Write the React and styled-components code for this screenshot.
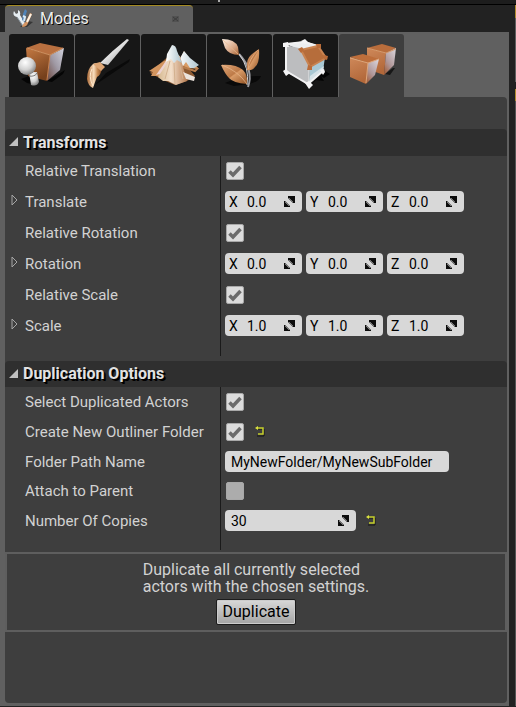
import React from "react";
import styled, { createGlobalStyle } from "styled-components";

const GlobalStyle = createGlobalStyle`
  *, *::before, *::after { box-sizing: border-box; }
  body { margin: 0; background: #222222; }
  button, input { font: inherit; color: inherit; margin: 0; padding: 0; border: 0; background: none; }
  button { cursor: pointer; }
`;

const Screen = styled.div`
  display: flex;
  flex-direction: column;
  min-height: 100vh;
  padding-bottom: 1px;
  background: #222222;
  color: #d2d2d2;
  font-family: Roboto, "Liberation Sans", sans-serif;
  font-size: 14px;
  line-height: 18px;
`;

const MenuStrip = styled.div`
  height: 5px;
  padding-left: 218px;
  background: #1d1d1d;
  border-bottom: 1px solid #000000;

  &::before {
    content: "";
    display: block;
    width: 2px;
    height: 2px;
    background: #aaaaaa;
  }
`;

const Workspace = styled.div`
  display: flex;
  flex: 1;
`;

const Dock = styled.section`
  display: flex;
  flex: 1;
  flex-direction: column;
  min-width: 0;
`;

const DockTab = styled.div`
  display: flex;
  align-items: center;
  width: 188px;
  height: 27px;
  margin-left: 5px;
  padding: 0 14px 0 8px;
  border-top: 1px solid #a48a22;
  border-radius: 4px 4px 0 0;
  background: #606060;
`;

const DockTitle = styled.h1`
  flex: 1;
  margin: 0 0 0 7px;
  color: #ececec;
  font-size: 16px;
  font-weight: 400;
  line-height: 20px;
  text-shadow: 1px 1px 0 #000000;
`;

const CloseButton = styled.button`
  display: flex;
`;

const Frame = styled.div`
  display: flex;
  flex: 1;
  flex-direction: column;
  padding: 2px 2px 3px 5px;
  background: #606060;
`;

const ModeBar = styled.div`
  display: flex;
  gap: 1px;
  padding-left: 4px;
`;

const ModeButton = styled.button`
  display: flex;
  width: 65px;
  height: 63px;
  border-radius: 3px 3px 0 0;
  background: ${({ $active }) => ($active ? "#3e3e3e" : "#171717")};
`;

const Content = styled.main`
  flex: 1;
  padding-top: 32px;
  border-radius: 0 4px 4px 4px;
  background: #3e3e3e;
`;

const Section = styled.section`
  margin-bottom: ${({ $gap }) => $gap}px;
`;

const SectionHeading = styled.h2`
  margin: 0;
`;

const SectionToggle = styled.button`
  display: flex;
  align-items: center;
  gap: 5px;
  width: 100%;
  height: ${({ $height }) => $height}px;
  padding-left: 4px;
  border-radius: 4px 4px 0 0;
  background: #2f2f2f;
  color: #e2e2e2;
  font-size: 16px;
  font-weight: 700;
  text-align: left;
  text-shadow: 1px 1px 0 #000000, 2px 2px 0 #000000;
`;

const Row = styled.div`
  display: grid;
  grid-template-columns: 215px 1fr;
`;

const NameCell = styled.div`
  display: flex;
  align-items: center;
  gap: 7px;
  padding: ${({ $top, $bottom }) => `${$top}px 0 ${$bottom}px`};
  padding-left: ${({ $nested }) => ($nested ? 6 : 20)}px;
  font-size: 15px;
`;

const ValueCell = styled.div`
  display: flex;
  align-items: center;
  gap: 4px;
  padding: ${({ $top, $bottom }) => `${$top}px 4px ${$bottom}px`};
  border-left: 1px solid #1a1a1a;
`;

const ExpandButton = styled.button`
  display: flex;
`;

const TickFrame = styled.span`
  display: grid;
  margin: 0 7px 0 1px;
`;

const TickInput = styled.input`
  grid-area: 1 / 1;
  width: 18px;
  height: 18px;
  appearance: none;
  border: 1px solid #a8a8a8;
  border-radius: 2px;
  background: #acacac;

  &:checked { background: #dcdcdc; }
  &:not(:checked) + svg { visibility: hidden; }
`;

const TickMark = styled.svg`
  grid-area: 1 / 1;
  pointer-events: none;
`;

const Field = styled.label`
  display: flex;
  align-items: center;
  width: ${({ $width }) => $width}px;
  height: 21px;
  padding: 0 7px 0 ${({ $inset }) => $inset}px;
  border-radius: 4px;
  background: #d8d8d8;
  color: #000000;
`;

const Axis = styled.span`
  width: 18px;
`;

const FieldInput = styled.input`
  flex: 1;
  min-width: 0;
  height: 21px;
  outline: 0;
`;

const ResetButton = styled.button`
  display: flex;
  margin-left: ${({ $indent }) => $indent}px;
`;

const ActionBox = styled.div`
  display: flex;
  flex-direction: column;
  align-items: center;
  gap: 4px;
  margin-top: 2px;
  padding: 7px 0 5px;
  border: 2px solid #5e5e5e;
`;

const ActionText = styled.p`
  margin: 0;
  font-size: 16px;
  line-height: 17px;
`;

const ActionButton = styled.button`
  height: 26px;
  padding: 0 6px;
  border: 1px solid #1c1c1c;
  border-radius: 2px;
  background: linear-gradient(#d8d8d8, #a4a4a4);
  box-shadow: inset 0 0 0 1px #cccccc;
  color: #000000;
  font-size: 16px;
  line-height: 20px;
`;

const RightEdge = styled.aside`
  display: flex;
  flex-direction: column;
  width: 7px;
  padding-left: 6px;
`;

const EdgePiece = styled.div`
  flex: ${({ $height }) => ($height ? `0 0 ${$height}px` : "1")};
  background: ${({ $color }) => $color};
`;

function ToolsIcon() {
  return (
    <svg width="20" height="20" viewBox="0 0 20 20" fill="none" aria-hidden="true">
      <path d="M7 18L14 18L20 13L15 12Z" fill="#252525" opacity=".7" />
      <path d="M1 2Q-1 7 4 8L10 17L13 16L7 6Q8 2 5 1L5 4L3 5Z" fill="#e6edf2" />
      <path d="M4 8L10 17" stroke="#8e9aa4" />
      <path d="M10 5L12 0L14 2L12 8L12 13L9 11Z" fill="#4f83b8" />
      <path d="M10 7L12 8L11 12" stroke="#d8e9f6" strokeWidth="2" />
      <path d="M19 5L17 4L13 13Q10 14 9 18Q14 18 15 14Z" fill="#d69663" />
      <path d="M18 5L14 13" stroke="#fff3e4" strokeWidth="2" />
    </svg>
  );
}

function PlaceIcon() {
  return (
    <svg width="65" height="63" viewBox="0 0 65 63" aria-hidden="true">
      <defs>
        <linearGradient id="boxFront" x1="0" y1="0" x2=".4" y2="1"><stop stopColor="#c57a43" /><stop offset="1" stopColor="#76401c" /></linearGradient>
        <linearGradient id="boxSide" x1="1" y1="0" x2="0" y2="1"><stop stopColor="#d2d3de" /><stop offset=".5" stopColor="#a09aa5" /><stop offset="1" stopColor="#6c4840" /></linearGradient>
        <radialGradient id="ball" cx=".4" cy=".3" r=".75"><stop stopColor="#ffffff" /><stop offset=".55" stopColor="#d2d2d2" /><stop offset="1" stopColor="#777777" /></radialGradient>
      </defs>
      <path d="M38 47L56 36L54 40L43 48ZM12 45L23 41L27 51L18 49Z" fill="#050505" />
      <path d="M17 14L31 9L55 14L41 21Z" fill="#b97040" />
      <path d="M17 14L41 21L38 47L19 42Z" fill="url(#boxFront)" />
      <path d="M41 21L55 14L51 36L38 47Z" fill="url(#boxSide)" />
      <path d="M18 14L41 21L54 14" fill="none" stroke="#d0915f" />
      <path d="M41 21L38 46" stroke="#c98250" />
      <path d="M20 38H28L30 48Q28 53 22 51Z" fill="url(#ball)" />
      <circle cx="18" cy="32" r="9" fill="url(#ball)" />
      <path d="M20 42Q26 43 28 39" fill="none" stroke="#777777" />
    </svg>
  );
}

function PaintIcon() {
  return (
    <svg width="65" height="63" viewBox="0 0 65 63" aria-hidden="true">
      <defs>
        <linearGradient id="bristle" x1="0" x2="1"><stop stopColor="#a96835" /><stop offset=".45" stopColor="#f8ddbd" /><stop offset=".7" stopColor="#c78b55" /><stop offset="1" stopColor="#814820" /></linearGradient>
        <linearGradient id="handle" x1="0" y1="0" x2="1" y2="1"><stop offset=".3" stopColor="#ffffff" /><stop offset="1" stopColor="#8b8b8b" /></linearGradient>
      </defs>
      <path d="M20 51L31 39L55 25L54 28L32 43Z" fill="#0a0a0a" />
      <path d="M52 5L54 6L33 31L25 29Q38 16 52 5Z" fill="url(#handle)" />
      <path d="M18 30Q24 27 27 34Q26 41 22 43Q20 48 18 54Q13 52 12 45Q12 35 18 30Z" fill="url(#bristle)" />
      <path d="M18 30L25 28L30 33L26 37Z" fill="#dda675" />
      <path d="M17 35Q13 42 18 52" stroke="#ffe8cd" fill="none" />
    </svg>
  );
}

function LandscapeIcon() {
  return (
    <svg width="65" height="63" viewBox="0 0 65 63" aria-hidden="true">
      <defs>
        <linearGradient id="slope" x1="0" x2="1"><stop stopColor="#d6b990" /><stop offset=".45" stopColor="#f3dfca" /><stop offset="1" stopColor="#b77d53" /></linearGradient>
        <linearGradient id="snow" x1="0" x2="1"><stop stopColor="#ffffff" /><stop offset="1" stopColor="#adc4ce" /></linearGradient>
      </defs>
      <path d="M9 39L22 27L30 20L40 25L54 42L46 47L34 51L22 46Z" fill="#8d5a32" />
      <path d="M43 17L37 29L46 34L58 35L48 24Z" fill="#d89b65" />
      <path d="M43 17L37 28L42 32L45 28L49 34L53 34L58 31L49 24Z" fill="url(#snow)" />
      <path d="M23 27L8 37L12 38L10 42L18 42L29 25Z" fill="#d3955f" />
      <path d="M27 22L17 43L22 47L27 47L35 51L46 47L39 22L32 19Z" fill="url(#slope)" />
      <path d="M31 11Q35 11 36 17L41 29L36 26L33 29L30 25L25 28L26 20Z" fill="url(#snow)" />
      <path d="M29 27L24 45M33 29L34 50M38 28L42 45" fill="none" stroke="#d3b18f" />
      <path d="M25 27L15 41L19 40L26 29" fill="#ecd2d0" />
      <path d="M42 38L54 43L53 47L45 45Z" fill="#ebe3dc" />
      <path d="M42 33L54 37L57 34" fill="none" stroke="#b87d4c" strokeWidth="2" />
    </svg>
  );
}

function FoliageIcon() {
  return (
    <svg width="65" height="63" viewBox="0 0 65 63" aria-hidden="true">
      <defs>
        <linearGradient id="leaf" x1="0" y1="0" x2="1" y2="1"><stop stopColor="#e0a779" /><stop offset=".48" stopColor="#bd7a47" /><stop offset=".52" stopColor="#d99b67" /><stop offset="1" stopColor="#915325" /></linearGradient>
        <linearGradient id="paleLeaf" x1="0" y1="0" x2="1" y2="1"><stop stopColor="#fff3e7" /><stop offset=".6" stopColor="#d9a887" /><stop offset="1" stopColor="#a86332" /></linearGradient>
      </defs>
      <path d="M18 49Q34 41 54 42Q52 48 42 50L27 52Z" fill="#090909" />
      <path d="M32 20Q47 36 41 53" fill="none" stroke="#9b9ba0" strokeWidth="2" />
      <path d="M32 20Q43 34 40 51" fill="none" stroke="#d2d2d4" />
      <path d="M15 5Q28 5 31 13L32 21Q22 21 18 14Z" fill="url(#paleLeaf)" />
      <path d="M14 31Q29 30 36 36Q41 41 40 50Q26 49 22 44Q18 40 14 31Z" fill="url(#leaf)" />
      <path d="M52 15Q53 29 48 33Q45 37 40 36Q39 25 44 21Q47 18 52 15Z" fill="url(#leaf)" />
      <path d="M15 31Q31 37 40 50M51 16Q42 25 41 35M16 6L31 20" stroke="#e9b98f" opacity=".7" fill="none" />
    </svg>
  );
}

function GeometryIcon() {
  return (
    <svg width="65" height="63" viewBox="0 0 65 63" aria-hidden="true">
      <path d="M36 52L52 37L57 40L51 44L48 42L51 47L43 46L37 52Z" fill="#040404" />
      <path d="M13 10L32 7L46 12L29 17Z" fill="#eceef0" />
      <path d="M13 11L30 15L37 33L36 50L13 38Z" fill="#bcbdbf" />
      <path d="M37 33L52 23L50 37L36 50Z" fill="#a9c8d4" />
      <path d="M37 42L51 32L50 37L36 50Z" fill="#d5e2e8" />
      <path d="M13 10V37L35 50L50 37M13 10L31 8L45 12" stroke="#f2f2f3" strokeWidth="2" fill="none" />
      <path d="M28 16L45 12L53 24L37 33Z" fill="#b66d3b" stroke="#c98350" strokeWidth="2" />
      <path d="M36 35V50" stroke="#e4e7e9" />
      <path d="M10 9L15 8L16 13H10ZM28 7L32 5L35 8L32 10ZM10 37L13 35L17 39L13 42ZM32 49L36 47L40 51L36 55ZM47 36L51 35L52 38L50 41Z" fill="#f4f4f5" />
      <path d="M25 15L29 13L31 16L28 19ZM43 10H48V14H44ZM50 21L55 22L54 26L51 25ZM35 31L39 32V36H34Z" fill="#ba6c39" />
    </svg>
  );
}

function DuplicateIcon() {
  return (
    <svg width="65" height="63" viewBox="0 0 65 63" aria-hidden="true">
      <defs>
        <linearGradient id="cubeFront" x1="0" y1="0" x2=".3" y2="1"><stop stopColor="#cf895a" /><stop offset="1" stopColor="#b2683a" /></linearGradient>
        <linearGradient id="cubeSide" x1=".8" y1="0" x2=".2" y2="1"><stop stopColor="#d7d1d7" /><stop offset=".6" stopColor="#af9698" /><stop offset="1" stopColor="#a45f3b" /></linearGradient>
      </defs>
      <path d="M46 40L54 34L56 34L51 41Z" fill="#171717" />
      <path d="M28 14L43 10L57 14L47 19Z" fill="#b96d3c" />
      <path d="M28 14L47 19L45 41L28 35Z" fill="url(#cubeFront)" />
      <path d="M47 19L57 14L55 31L45 41Z" fill="url(#cubeSide)" />
      <path d="M28 14L47 19L57 15" fill="none" stroke="#d79b6d" />
      <path d="M11 23L24 20L40 25L29 29Z" fill="#bd6e3b" />
      <path d="M11 23L29 29L27 50L11 43Z" fill="url(#cubeFront)" />
      <path d="M29 29L40 25L36 41L27 50Z" fill="url(#cubeSide)" />
      <path d="M11 24L29 29L40 25M29 29L27 49" fill="none" stroke="#dfa67a" />
    </svg>
  );
}

function CloseIcon() {
  return (
    <svg width="7" height="8" viewBox="0 0 7 8" aria-hidden="true">
      <path d="M0 1H7V7H0Z" fill="#525252" />
      <path d="M1 2L6 6M6 2L1 6" stroke="#3c3c3c" />
    </svg>
  );
}

function CornerTriangle() {
  return (
    <svg width="9" height="13" viewBox="0 0 9 13" aria-hidden="true">
      <path d="M9 1V10H0Z" fill="#c0c0c0" />
    </svg>
  );
}

function OutlineTriangle() {
  return (
    <svg width="7" height="15" viewBox="0 0 7 15" aria-hidden="true">
      <path d="M1 1L6 6L1 11Z" fill="none" stroke="#a6a6a6" />
    </svg>
  );
}

function DragIcon() {
  return (
    <svg width="11" height="12" viewBox="0 0 11 12" aria-hidden="true">
      <path d="M4 0H11V7L9 7L4 2Z" fill="#0c0c0c" />
      <path d="M0 5H1L6 10V11H0Z" fill="#0c0c0c" />
      <path d="M5 2L9 6M1 6L5 10" stroke="#777777" />
    </svg>
  );
}

function ResetIcon() {
  return (
    <svg width="10" height="12" viewBox="0 0 10 12" fill="none" aria-hidden="true">
      <path d="M3 3H9V10H2" stroke="#151515" />
      <path d="M3 2H8V8H3" stroke="#c6d02c" strokeWidth="1.5" />
      <path d="M0 2L3 0V4Z" fill="#dce340" />
    </svg>
  );
}

function Tick({ id, checked = true }) {
  return (
    <TickFrame>
      <TickInput id={id} type="checkbox" defaultChecked={checked} />
      <TickMark width="18" height="18" viewBox="0 0 18 18" fill="none" aria-hidden="true">
        <path d="M3.5 9.5L7 13L14.5 5" stroke="#6b6b6b" strokeWidth="3.5" />
      </TickMark>
    </TickFrame>
  );
}

function VectorFields({ name, value }) {
  return ["X", "Y", "Z"].map((axis) => (
    <Field key={axis} $width={77} $inset={4}>
      <Axis>{axis}</Axis>
      <FieldInput aria-label={`${name} ${axis}`} defaultValue={value} />
      <DragIcon />
    </Field>
  ));
}

function Reset({ name, indent = 0 }) {
  return (
    <ResetButton type="button" aria-label={`Reset ${name}`} $indent={indent}>
      <ResetIcon />
    </ResetButton>
  );
}

function Property({ name, id, nested, top, bottom, children }) {
  return (
    <Row>
      <NameCell $nested={nested} $top={top} $bottom={bottom}>
        {nested && (
          <ExpandButton type="button" aria-label={`Expand ${name}`}>
            <OutlineTriangle />
          </ExpandButton>
        )}
        {id ? <label htmlFor={id}>{name}</label> : <span>{name}</span>}
      </NameCell>
      <ValueCell $top={top} $bottom={bottom}>{children}</ValueCell>
    </Row>
  );
}

function Group({ title, height, gap = 0, children }) {
  return (
    <Section $gap={gap}>
      <SectionHeading>
        <SectionToggle type="button" aria-expanded="true" $height={height}>
          <CornerTriangle />
          {title}
        </SectionToggle>
      </SectionHeading>
      {children}
    </Section>
  );
}

const modes = [
  { name: "Place", Icon: PlaceIcon },
  { name: "Paint", Icon: PaintIcon },
  { name: "Landscape", Icon: LandscapeIcon },
  { name: "Foliage", Icon: FoliageIcon },
  { name: "Geometry", Icon: GeometryIcon },
  { name: "Duplication", Icon: DuplicateIcon, active: true },
];

const transforms = [
  { check: "Relative Translation", vector: "Translate", value: "0.0" },
  { check: "Relative Rotation", vector: "Rotation", value: "0.0" },
  { check: "Relative Scale", vector: "Scale", value: "1.0", last: true },
];

export default function App() {
  return (
    <>
      <GlobalStyle />
      <Screen>
        <MenuStrip />
        <Workspace>
          <Dock>
            <DockTab>
              <ToolsIcon />
              <DockTitle>Modes</DockTitle>
              <CloseButton type="button" aria-label="Close"><CloseIcon /></CloseButton>
            </DockTab>
            <Frame>
              <ModeBar>
                {modes.map(({ name, Icon, active }) => (
                  <ModeButton key={name} type="button" aria-label={name} aria-pressed={!!active} $active={active}>
                    <Icon />
                  </ModeButton>
                ))}
              </ModeBar>
              <Content>
                <Group title="Transforms" height={27} gap={5}>
                  {transforms.map(({ check, vector, value, last }) => (
                    <React.Fragment key={vector}>
                      <Property name={check} id={`relative-${vector}`} top={6} bottom={7}>
                        <Tick id={`relative-${vector}`} />
                      </Property>
                      <Property name={vector} nested top={4} bottom={last ? 20 : 6}>
                        <VectorFields name={vector} value={value} />
                      </Property>
                    </React.Fragment>
                  ))}
                </Group>
                <Group title="Duplication Options" height={26}>
                  <Property name="Select Duplicated Actors" id="select-actors" top={6} bottom={6}>
                    <Tick id="select-actors" />
                  </Property>
                  <Property name="Create New Outliner Folder" id="new-folder" top={6} bottom={6}>
                    <Tick id="new-folder" />
                    <Reset name="Create New Outliner Folder" />
                  </Property>
                  <Property name="Folder Path Name" id="folder-path" top={4} bottom={4}>
                    <Field $width={224} $inset={6}>
                      <FieldInput id="folder-path" defaultValue="MyNewFolder/MyNewSubFolder" />
                    </Field>
                  </Property>
                  <Property name="Attach to Parent" id="attach" top={6} bottom={6}>
                    <Tick id="attach" checked={false} />
                  </Property>
                  <Property name="Number Of Copies" id="copies" top={4} bottom={19}>
                    <Field $width={131} $inset={6}>
                      <FieldInput id="copies" defaultValue="30" />
                      <DragIcon />
                    </Field>
                    <Reset name="Number Of Copies" indent={6} />
                  </Property>
                </Group>
                <ActionBox>
                  <ActionText>
                    Duplicate all currently selected
                    <br />
                    actors with the chosen settings.
                  </ActionText>
                  <ActionButton type="button">Duplicate</ActionButton>
                </ActionBox>
              </Content>
            </Frame>
          </Dock>
          <RightEdge>
            <EdgePiece $height={13} $color="#b08b2c" />
            <EdgePiece $height={64} $color="#606060" />
            <EdgePiece $height={7} $color="#222222" />
            <EdgePiece $height={12} $color="#b08b2c" />
            <EdgePiece $color="#555555" />
          </RightEdge>
        </Workspace>
      </Screen>
    </>
  );
}
